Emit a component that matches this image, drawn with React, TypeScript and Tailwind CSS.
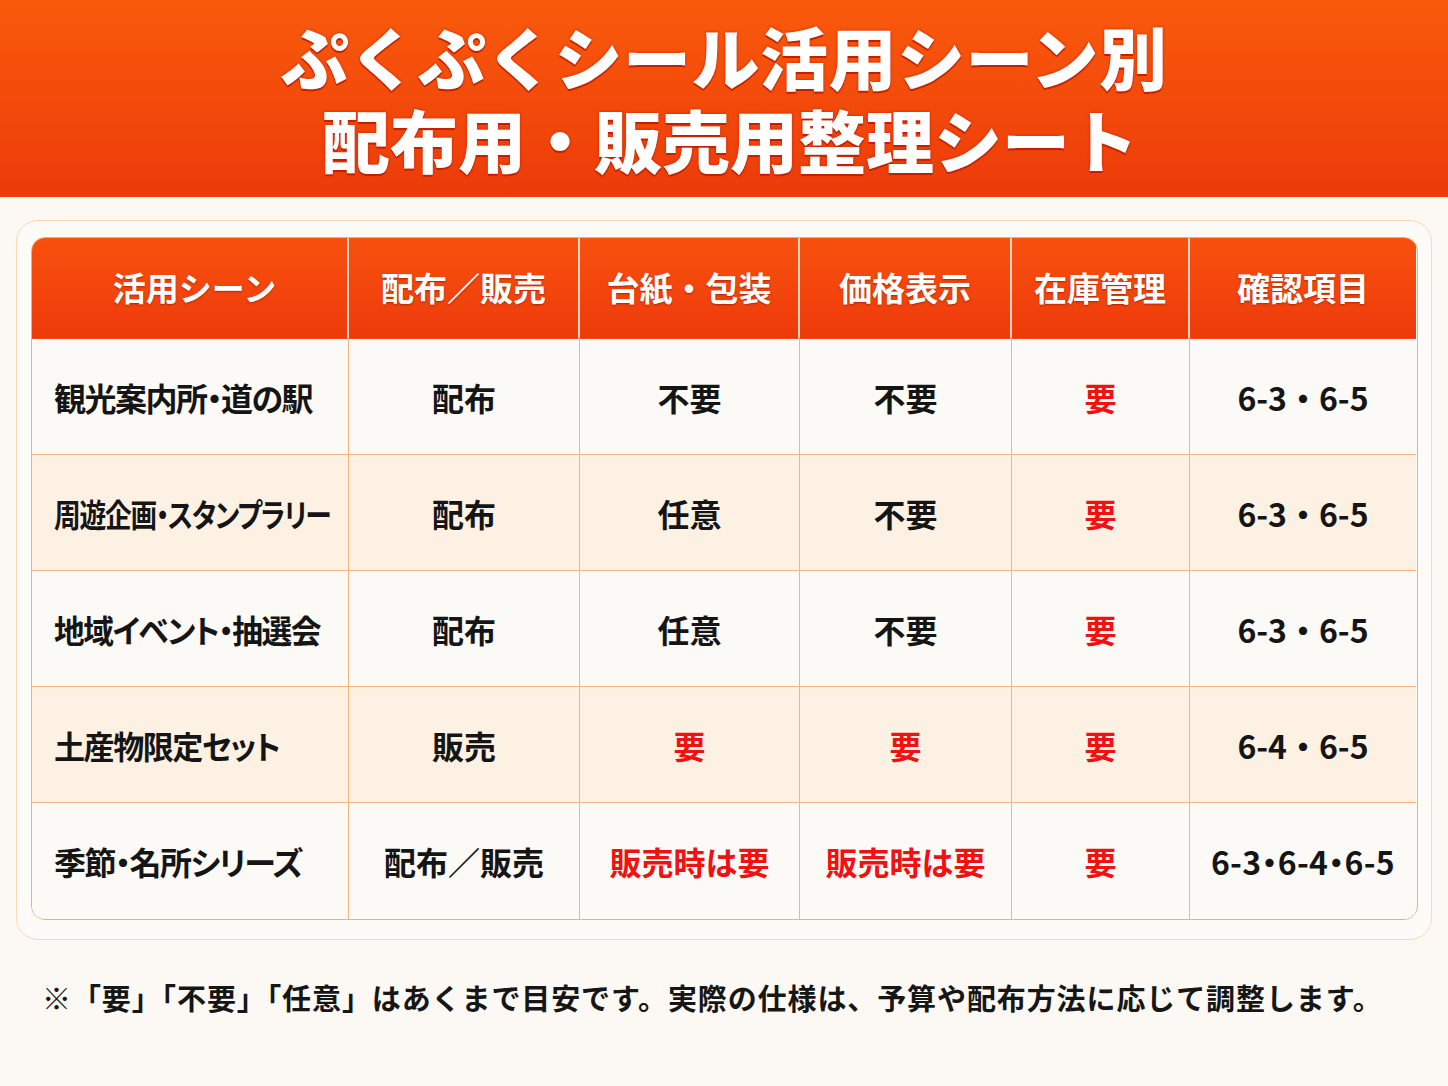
import React from 'react'

const COLS = ['活用シーン', '配布／販売', '台紙・包装', '価格表示', '在庫管理', '確認項目']

// red marks the "要" style cells, cls adds per-cell tweaks
type Cell = { t: string; red?: boolean; cls?: string }

const ROWS: Cell[][] = [
  [{ t: '観光案内所・道の駅' }, { t: '配布' }, { t: '不要' }, { t: '不要' }, { t: '要', red: true }, { t: '6-3・6-5' }],
  [{ t: '周遊企画・スタンプラリー', cls: 'scale-x-[0.835]' }, { t: '配布' }, { t: '任意' }, { t: '不要' }, { t: '要', red: true }, { t: '6-3・6-5' }],
  [{ t: '地域イベント・抽選会', cls: 'scale-x-[0.96]' }, { t: '配布' }, { t: '任意' }, { t: '不要' }, { t: '要', red: true }, { t: '6-3・6-5' }],
  [{ t: '土産物限定セット', cls: 'scale-x-[0.97]' }, { t: '販売' }, { t: '要', red: true }, { t: '要', red: true }, { t: '要', red: true }, { t: '6-4・6-5' }],
  [{ t: '季節・名所シリーズ' }, { t: '配布／販売' }, { t: '販売時は要', red: true }, { t: '販売時は要', red: true }, { t: '要', red: true }, { t: '6-3・6-4・6-5', cls: '[font-feature-settings:"palt"] tracking-[0.3px]' }],
]

const font = "font-['Noto_Sans_CJK_JP','Noto_Sans',sans-serif]"

export default function App() {
  return (
    <div className={`min-h-[1086px] w-[1448px] bg-[#fcf9f4] ${font}`}>
      {/* Title band */}
      <header className="h-[197px] bg-gradient-to-b from-[#fa5a0c] to-[#ec3a0a] flex justify-center pt-[14px]">
        <h1 className="text-center text-[68px] leading-[83px] font-black text-white tracking-[0.5px] [text-shadow:0_2px_0_#c42000,0_0_3px_#d02000]">
          ぷくぷくシール活用シーン別
          <br />
          <span className="pl-[12px] tracking-normal">配布用・販売用整理シート</span>
        </h1>
      </header>

      {/* Table card */}
      <div className="mx-[16px] mt-[23px] rounded-[22px] border border-[#fbd9b4] bg-[#fdfbf8] pl-[14px] pr-[13px] pt-[16px] pb-[19px]">
        <div className="rounded-[14px] border-[1.5px] border-[#f6ac74] overflow-hidden">
          <div className="grid grid-cols-[317px_231px_220px_212px_178px_226px]">
            {COLS.map((c, i) => (
              <div
                key={c}
                className={`h-[101px] flex items-center justify-center bg-gradient-to-b from-[#f8500e] to-[#ee3a0b] border-b-[1.5px] border-b-[#f2491c] text-white text-[33px] font-bold [text-shadow:0_1px_2px_#b52400] ${i < COLS.length - 1 ? 'border-r-[2px] border-r-[#fbd6c4]' : ''} ${i === 0 ? 'pl-[10px]' : ''}`}
              >
                {c}
              </div>
            ))}
            {ROWS.map((r, ri) =>
              r.map((c, ci) => (
                <div
                  key={`${ri}-${ci}`}
                  className={`h-[116px] flex items-center whitespace-nowrap text-[32px] font-bold ${ri % 2 === 1 ? 'bg-[#fdf1e3]' : 'bg-[#fcfaf6]'} ${ri < ROWS.length - 1 ? 'border-b-[1.5px] border-b-[#f6b582]' : ''} ${ci < 5 ? 'border-r-[1.5px] border-r-[#f6b582]' : ''} ${ci === 0 ? 'justify-start pl-[22px] tracking-[-1.5px] [font-feature-settings:"palt"]' : 'justify-center'} ${c.red ? 'text-[#f01212]' : 'text-[#151515]'}`}
                >
                  <span className={`inline-block ${ci === 0 ? 'origin-left' : ''} ${c.cls ?? ''}`}>{c.t}</span>
                </div>
              ))
            )}
          </div>
        </div>
      </div>

      {/* Footnote */}
      <p className="mt-[37px] pl-[42px] text-[29px] leading-[40px] font-bold text-[#161616] tracking-[0.9px] whitespace-nowrap">
        ※「要」「不要」「任意」はあくまで目安です。実際の仕様は、予算や配布方法に応じて調整します。
      </p>
    </div>
  )
}
